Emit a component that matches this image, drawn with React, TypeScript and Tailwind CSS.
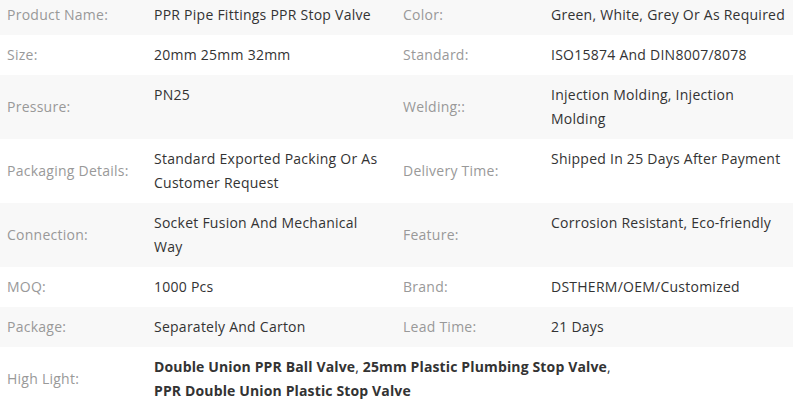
type Row = {
  label1: string;
  value1: string;
  label2: string;
  value2: string;
};

// line breaks follow the reference's wrapping
const rows: Row[] = [
  { label1: 'Product Name:', value1: 'PPR Pipe Fittings PPR Stop Valve', label2: 'Color:', value2: 'Green, White, Grey Or As Required' },
  { label1: 'Size:', value1: '20mm 25mm 32mm', label2: 'Standard:', value2: 'ISO15874 And DIN8007/8078' },
  { label1: 'Pressure:', value1: 'PN25', label2: 'Welding::', value2: 'Injection Molding, Injection\nMolding' },
  { label1: 'Packaging Details:', value1: 'Standard Exported Packing Or As\nCustomer Request', label2: 'Delivery Time:', value2: 'Shipped In 25 Days After Payment' },
  { label1: 'Connection:', value1: 'Socket Fusion And Mechanical\nWay', label2: 'Feature:', value2: 'Corrosion Resistant, Eco-friendly' },
  { label1: 'MOQ:', value1: '1000 Pcs', label2: 'Brand:', value2: 'DSTHERM/OEM/Customized' },
  { label1: 'Package:', value1: 'Separately And Carton', label2: 'Lead Time:', value2: '21 Days' },
];

const highlights = [
  'Double Union PPR Ball Valve',
  '25mm Plastic Plumbing Stop Valve',
  'PPR Double Union Plastic Stop Valve',
];

export default function App() {
  return (
    <div className="w-[793px] h-[403px] overflow-hidden bg-white font-['Open_Sans',sans-serif] text-[14px] tracking-[0.25px] leading-6">
      <table className="w-full -mt-[5px] border-collapse table-fixed">
        <colgroup>
          <col className="w-[147px]" />
          <col className="w-[249px]" />
          <col className="w-[148px]" />
          <col className="w-[249px]" />
        </colgroup>
        <tbody>
          {rows.map((r, i) => (
            <tr key={r.label1} className={i % 2 === 0 ? 'bg-[#f8f8f8]' : 'bg-white'}>
              <td className="pl-[7px] py-2 align-middle text-[#999] whitespace-nowrap">{r.label1}</td>
              <td className="pl-[7px] py-2 align-top text-[#333] whitespace-pre-line">{r.value1}</td>
              <td className="pl-[7px] py-2 align-middle text-[#999] whitespace-nowrap">{r.label2}</td>
              <td className="pl-[7px] py-2 align-top text-[#333] whitespace-pre-line">{r.value2}</td>
            </tr>
          ))}
          <tr className="bg-white">
            <td className="pl-[7px] py-2 align-middle text-[#999]">High Light:</td>
            <td colSpan={3} className="pl-[7px] py-2 align-top text-[#333] tracking-[0.14px]">
              {highlights.map((h, i) => (
                <span key={h}>
                  <b className="font-bold">{h}</b>
                  {i < highlights.length - 1 ? ', ' : ''}
                  {i === 1 ? <br /> : null}
                </span>
              ))}
            </td>
          </tr>
        </tbody>
      </table>
    </div>
  );
}
